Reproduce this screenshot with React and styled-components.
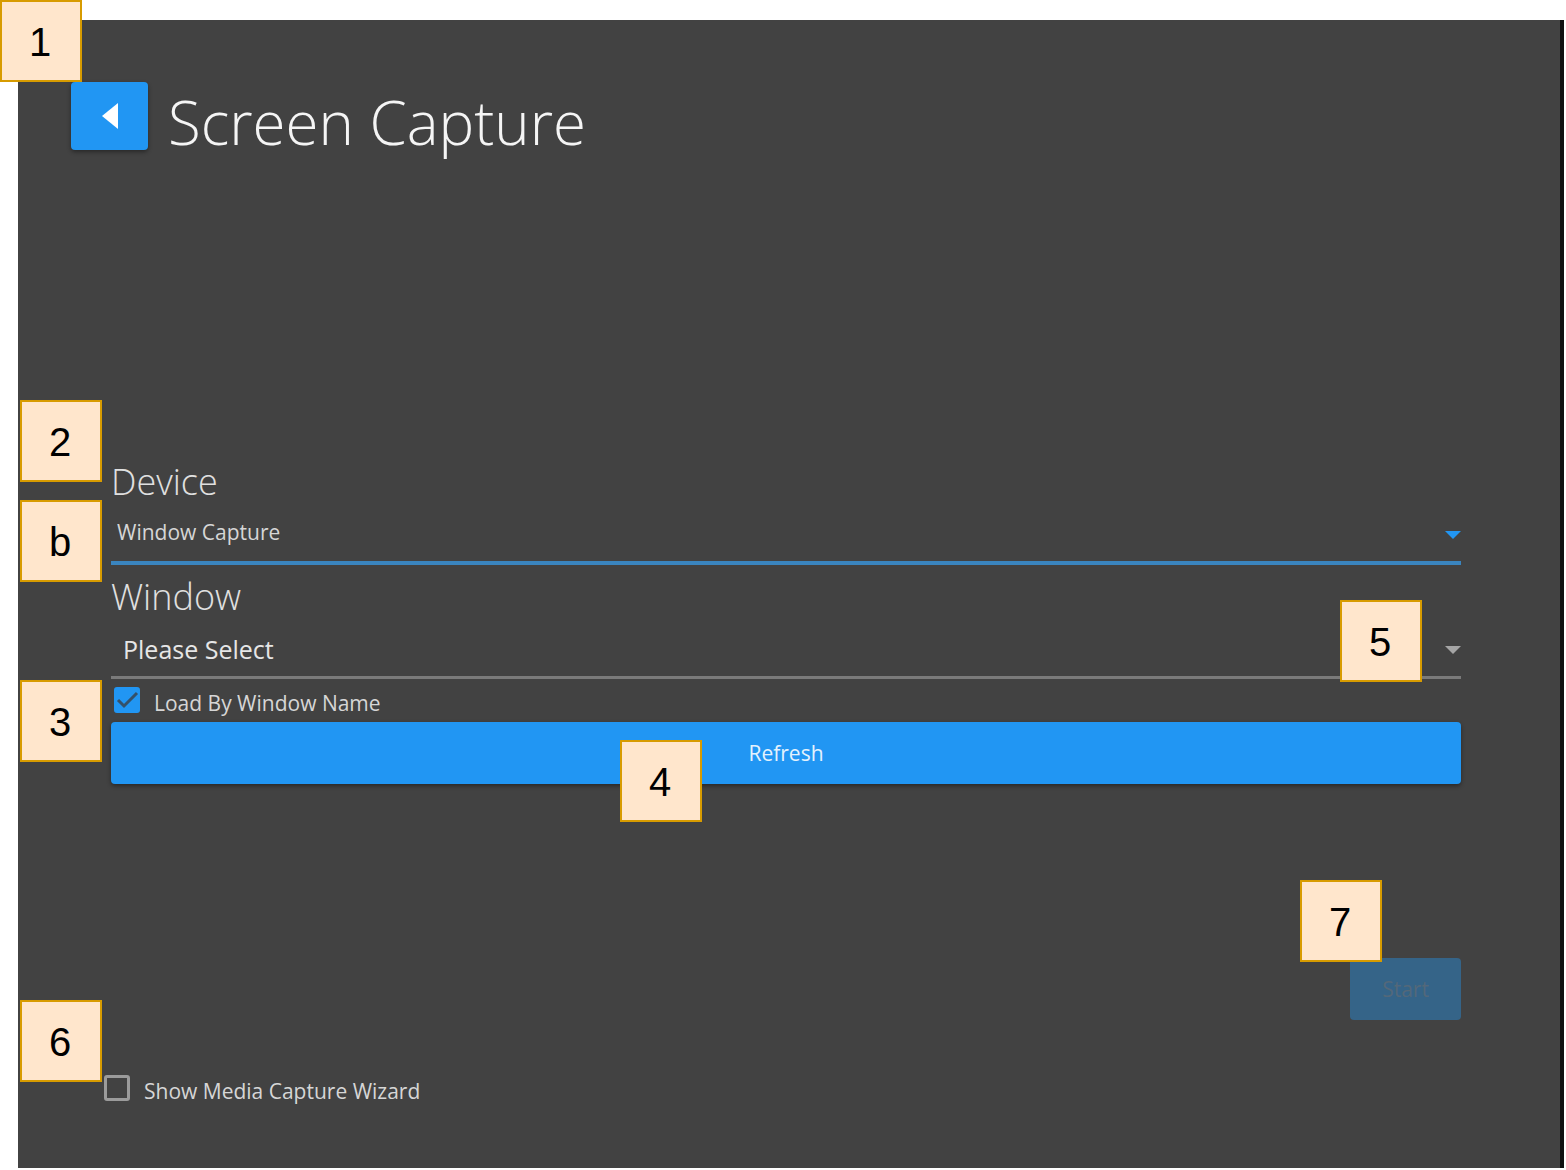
import { useState } from 'react';
import styled, { createGlobalStyle } from 'styled-components';

const GlobalStyle = createGlobalStyle`
  * {
    box-sizing: border-box;
  }
  body {
    margin: 0;
    background-color: #ffffff;
    font-family: 'Open Sans', 'Noto Sans', sans-serif;
  }
`
const Page = styled.div`
  position: relative;
  display: flex;
  min-height: 100vh;
  padding: 20px 2px 2px 18px;
`
const Panel = styled.main`
  flex: 1;
  display: flex;
  flex-direction: column;
  padding: 62px 99px 61px 53px;
  background-color: #424242;
  border-right: 4px solid #111212;
`
const Header = styled.header`
  display: flex;
  align-items: flex-start;
  gap: 20px;
`
const Title = styled.h1`
  margin: 0;
  font-size: 60px;
  line-height: 80px;
  font-weight: 300;
  color: #f5f5f5;
`
const Button = styled.button`
  display: flex;
  align-items: center;
  justify-content: center;
  width: ${p => p.$width};
  height: ${p => p.$height || '62px'};
  padding: 0;
  border: none;
  border-radius: 4px;
  background-color: #2196f3;
  box-shadow: 0 2px 4px rgba(0,0,0, 0.4);
  font-family: inherit;
  font-size: 21px;
  color: #e3f2fd;
  cursor: pointer;

  &:disabled {
    background-color: #356488;
    box-shadow: none;
    color: #53687a;
    cursor: default;
  }
`
const Form = styled.form`
  flex: 1;
  display: flex;
  flex-direction: column;
  margin: 296px 0 0 40px;
`
const Field = styled.div`
  position: relative;
  display: flex;
  flex-direction: column;
  margin-bottom: 8px;
`
const Label = styled.label`
  font-size: 36px;
  line-height: 48px;
  font-weight: 300;
  color: #e0e0e0;
`
const SelectWrap = styled.div`
  display: grid;
  align-items: center;
  color: ${p => p.$active ? '#2196f3' : '#a5a5a5'};
  border-bottom: ${p => p.$active ? '4px solid #3a85bf' : '3px solid #7a7a7a'};

  > * {
    grid-area: 1 / 1;
  }
`
const Select = styled.select`
  appearance: none;
  width: 100%;
  height: 55px;
  padding: ${p => p.$large ? '0 32px 0 12px' : '0 32px 4px 6px'};
  border: none;
  outline: none;
  background: transparent;
  font-family: inherit;
  font-size: ${p => p.$large ? '25px' : '21px'};
  color: ${p => p.$large ? '#e6e6e6' : '#d6d6d6'};
`
const Arrow = styled.svg`
  justify-self: end;
  margin-top: 2px;
  pointer-events: none;
`
const CheckLabel = styled.label`
  display: flex;
  align-items: flex-start;
  gap: 14px;
  width: fit-content;
  font-size: 21px;
  line-height: 32px;
  color: #d6d6d6;
`
const Checkbox = styled.input`
  appearance: none;
  width: 26px;
  height: 26px;
  margin: 0;
  border: 3px solid #9b9b9b;
  border-radius: 3px;

  &:checked {
    border-color: #2196f3;
    background-color: #2196f3;
  }
`
const CheckBox = styled.span`
  display: grid;

  > * {
    grid-area: 1 / 1;
  }
`
const Tick = styled.svg`
  pointer-events: none;
`
const WindowOption = styled.div`
  position: relative;
  padding-left: 3px;
`
const Anchor = styled.div`
  position: relative;
  margin: ${p => p.$margin || 0};
  align-self: ${p => p.$end ? 'flex-end' : 'auto'};
`
const Footer = styled.footer`
  position: relative;
  padding-left: 33px;
`
const Marker = styled.span`
  position: absolute;
  z-index: 2;
  top: ${p => p.$top};
  left: ${p => p.$left || 'auto'};
  right: ${p => p.$right || 'auto'};
  display: flex;
  align-items: center;
  justify-content: center;
  width: 82px;
  height: 82px;
  padding: 2px 2px 0 0;
  border: 2px solid #d79b00;
  background-color: #ffe6cc;
  font-family: 'Liberation Sans', Arial, sans-serif;
  font-size: 40px;
  line-height: 48px;
  color: #000000;
`

const DownArrow = () => (
  <Arrow width="16" height="8" viewBox="0 0 16 8" fill="currentColor" aria-hidden="true">
    <path d="M0 0h16L8 8z" />
  </Arrow>
);

const Check = ({ checked, onChange, children }) => (
  <CheckLabel>
    <CheckBox>
      <Checkbox type="checkbox" checked={checked} onChange={e => onChange(e.target.checked)} />
      {checked && (
        <Tick width="26" height="26" viewBox="0 0 26 26" fill="none" stroke="#34516a" strokeWidth="3" aria-hidden="true">
          <path d="M4 13l6 6L23 6" />
        </Tick>
      )}
    </CheckBox>
    {children}
  </CheckLabel>
);

const App = () => {
  const [byName, setByName] = useState(true);
  const [showWizard, setShowWizard] = useState(false);

  return (
    <>
      <GlobalStyle />
      <Page>
        <Marker $top="0" $left="0">1</Marker>
        <Panel>
          <Header>
            <Button type="button" aria-label="Back" $width="77px" $height="68px">
              <svg width="16" height="26" viewBox="0 0 16 26" fill="#ffffff" aria-hidden="true">
                <path d="M16 0v26L0 13z" />
              </svg>
            </Button>
            <Title>Screen Capture</Title>
          </Header>
          <Form onSubmit={e => e.preventDefault()}>
            <Field>
              <Marker $top="-58px" $left="-91px">2</Marker>
              <Marker $top="42px" $left="-91px">b</Marker>
              <Label htmlFor="device">Device</Label>
              <SelectWrap $active>
                <Select id="device">
                  <option>Window Capture</option>
                </Select>
                <DownArrow />
              </SelectWrap>
            </Field>
            <Field>
              <Marker $top="27px" $right="39px">5</Marker>
              <Label htmlFor="window">Window</Label>
              <SelectWrap>
                <Select id="window" $large>
                  <option>Please Select</option>
                </Select>
                <DownArrow />
              </SelectWrap>
            </Field>
            <WindowOption>
              <Marker $top="-7px" $left="-91px">3</Marker>
              <Check checked={byName} onChange={setByName}>Load By Window Name</Check>
            </WindowOption>
            <Anchor $margin="3px 0 174px">
              <Button type="button" $width="100%">Refresh</Button>
              <Marker $top="18px" $left="calc(50% - 166px)">4</Marker>
            </Anchor>
            <Anchor $end>
              <Button type="submit" $width="111px" disabled>Start</Button>
              <Marker $top="-78px" $right="79px">7</Marker>
            </Anchor>
          </Form>
          <Footer>
            <Marker $top="-75px" $left="-51px">6</Marker>
            <Check checked={showWizard} onChange={setShowWizard}>Show Media Capture Wizard</Check>
          </Footer>
        </Panel>
      </Page>
    </>
  );
};

export default App;
